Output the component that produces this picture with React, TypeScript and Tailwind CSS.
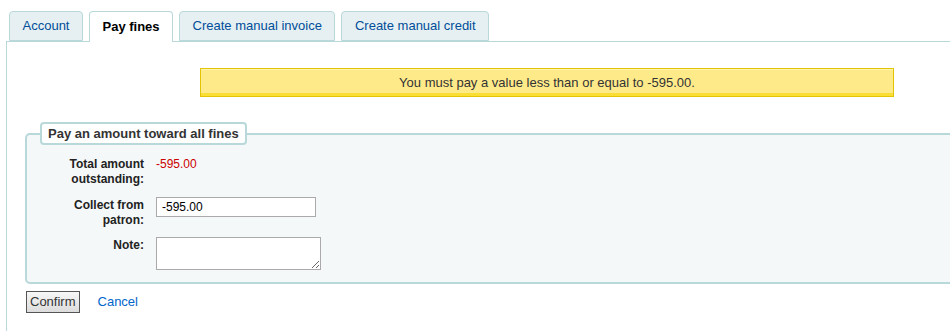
import React from 'react';

const tabs = [
  { label: 'Account', active: false },
  { label: 'Pay fines', active: true },
  { label: 'Create manual invoice', active: false },
  { label: 'Create manual credit', active: false },
];

export default function App() {
  return (
    <div className="w-[950px] h-[331px] overflow-hidden bg-white font-['Liberation_Sans',Arial,sans-serif] text-[13px] text-[#222]">
      <div className="pt-[11px] pl-[6px]">
        <ul className="flex gap-[6px] pl-[3px] relative z-10">
          {tabs.map((t) => (
            <li
              key={t.label}
              className={
                t.active
                  ? 'h-[31px] -mb-px px-[12.5px] flex items-center rounded-t-[4px] border border-b-0 border-[#b9d8d9] bg-white font-bold text-black'
                  : 'h-[30px] px-[12.5px] flex items-center rounded-t-[4px] border border-[#b9d8d9] bg-[#e6f0f2] text-[#004d99]'
              }
            >
              {t.label}
            </li>
          ))}
        </ul>

        <div className="border-l border-t border-[#b9d8d9] h-[290px]">
          <div className="ml-[193px] mt-[26px] w-[694px] h-[29px] flex items-center justify-center border border-[#e2c500] bg-[#ffea8a] shadow-[inset_0_-3px_0_#fadd35,inset_0_1px_0_#fff4b0] text-[#333]">
            You must pay a value less than or equal to -595.00.
          </div>

          <fieldset className="ml-[18px] mt-[25px] w-[1000px] border-2 border-[#b9d8d9] rounded-[5px] bg-[#f4f8f9] pb-[12px] text-[12px]">
            <legend className="ml-[13px] px-[6px] py-[2px] leading-[15px] text-[13px] border-2 border-[#b9d8d9] rounded-[4px] bg-white font-bold text-[#333]">
              Pay an amount toward all fines
            </legend>
            <div className="pt-[11px] flex flex-col gap-[10px]">
              <div className="flex items-start">
                <div className="w-[117px] mr-[12px] pt-px text-right font-bold leading-[15px]">
                  Total amount<br />outstanding:
                </div>
                <div className="pt-px leading-[15px] text-[#cc0000]">-595.00</div>
              </div>
              <div className="flex items-start">
                <div className="w-[117px] mr-[12px] pt-px text-right font-bold leading-[15px]">
                  Collect from<br />patron:
                </div>
                <input
                  type="text"
                  defaultValue="-595.00"
                  className="w-[160px] h-[20px] px-[5px] border border-[#aaa] bg-white text-[12px] text-black outline-none"
                />
              </div>
              <div className="flex items-start -mt-px">
                <div className="w-[117px] mr-[12px] pt-px text-right font-bold leading-[15px]">Note:</div>
                <textarea className="w-[165px] h-[33px] border border-[#aaa] bg-white outline-none" />
              </div>
            </div>
          </fieldset>

          <div className="ml-[19px] mt-[7px] flex items-center">
            <button className="h-[22px] px-[3px] border border-[#555] bg-linear-to-b from-[#f7f7f7] to-[#dcdcdc] text-[#333] text-[13px]">
              Confirm
            </button>
            <a href="#" className="ml-[18px] text-[#0066cc]">Cancel</a>
          </div>
        </div>
      </div>
    </div>
  );
}
